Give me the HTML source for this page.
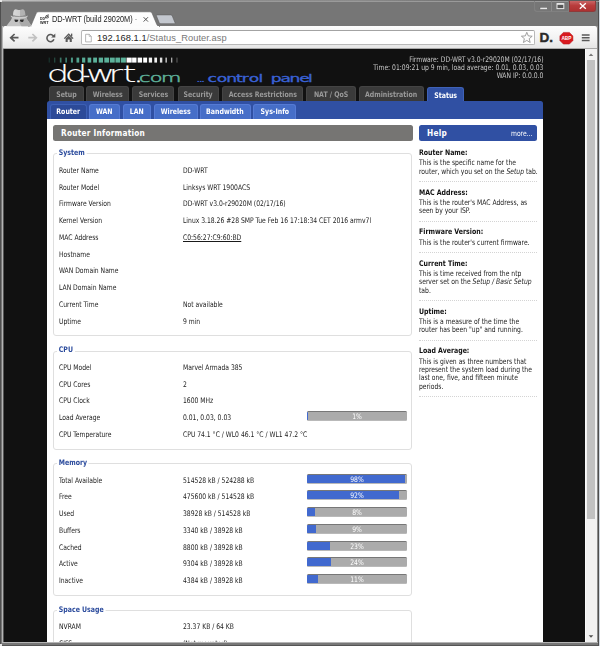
<!DOCTYPE html>
<html lang="en">
<head>
<meta charset="utf-8">
<title>DD-WRT (build 29020M) - Router Status</title>
<style>
html,body{margin:0;padding:0;}
body{width:600px;height:646px;overflow:hidden;position:relative;background:#767676;font-family:"DejaVu Sans Condensed","Liberation Sans",sans-serif;}
.abs{position:absolute;}
/* ---------- window frame ---------- */
#frame{left:0;top:0;width:600px;height:646px;background:#767676;}
#fr-top0{left:0;top:0;width:600px;height:1px;background:linear-gradient(90deg,#c4c4c4,#8e8e8e 25%,#8a8a8a 60%,#5c5c5c 92%);}
#fr-top1{left:0;top:1px;width:600px;height:1px;background:#9a9a9a;}
#fr-l0{left:0;top:2px;width:1px;height:642px;background:#4e4e4e;}
#fr-l2{left:2px;top:26px;width:1px;height:617px;background:#b4b4b4;}
#fr-l3{left:3px;top:48px;width:1px;height:594px;background:#555;}
#fr-r0{left:599px;top:0;width:1px;height:646px;background:#cfd6de;}
#fr-r1{left:598px;top:2px;width:1px;height:644px;background:#4e4e4e;}
#fr-r2{left:597px;top:26px;width:1px;height:617px;background:#8c8c8c;}
#fr-b0{left:3px;top:642px;width:595px;height:1px;background:#b4b4b4;}
#fr-b1{left:1px;top:643px;width:597px;height:2px;background:#777;}
#fr-b2{left:2px;top:645px;width:597px;height:1px;background:#555;}
#fr-bl{left:0;top:644px;width:2px;height:2px;background:#e8e8e8;}
#fr-tl{left:0;top:0;width:2px;height:2px;background:#e8e8e8;}
/* caption buttons */
#btn-min{left:534px;top:1px;width:18px;height:11px;border-right:1px solid #8a8a8a;border-bottom:1px solid #808080;border-left:1px solid #808080;box-sizing:border-box;border-radius:0 0 0 3px;}
#btn-max{left:552px;top:1px;width:17px;height:11px;border-right:1px solid #808080;border-bottom:1px solid #808080;box-sizing:border-box;}
#btn-close{left:569px;top:1px;width:27px;height:11px;background:linear-gradient(#c96666,#b93c3c 45%,#ad3131);border:1px solid #8e3a3a;border-top:none;box-sizing:border-box;border-radius:0 0 3px 0;}
/* toolbar */
#toolbar{left:3px;top:26px;width:594px;height:22px;background:linear-gradient(#fdfdfd,#f2f2f2 60%,#e6e6e6);border-radius:2px 2px 0 0;}
#tb-line{left:3px;top:48px;width:594px;height:1px;background:#a9a9a9;}
#urlbox{left:81px;top:30px;width:454px;height:15px;box-sizing:border-box;background:#fff;border:1px solid #b9b9b9;border-top-color:#a3a3a3;border-radius:2px;}
#urltext{left:97px;top:32px;font-family:"Liberation Sans",sans-serif;font-size:9.3px;line-height:13px;color:#222;white-space:nowrap;letter-spacing:0.05px;}
#urltext span{color:#777;}
#tabtitle{left:52px;top:13px;font-family:"Liberation Sans",sans-serif;font-size:8.5px;line-height:13px;color:#222;white-space:nowrap;transform:scaleX(.865);transform-origin:0 50%;}
/* ---------- page ---------- */
#page{left:4px;top:49px;width:581.3px;height:593px;background:#111;overflow:hidden;}
#scroll{left:585.3px;top:49px;width:11.5px;height:593px;background:#f1f1f1;border-left:1px solid #fafafa;box-sizing:border-box;}
#thumb{left:587.3px;top:59.75px;width:7.5px;height:458.75px;background:#c1c1c1;}
#pg{left:-4px;top:-49px;width:600px;height:700px;}
#pg .t{position:absolute;white-space:nowrap;}
.info{right:56.7px;font-size:7.7px;line-height:10px;color:#c9c9c9;text-align:right;transform:scaleX(.875);transform-origin:100% 50%;}
/* main tabs */
.mt{top:86px;height:15px;box-sizing:border-box;background:#3a3a3a;border:1px solid #444;border-bottom:none;border-radius:3px 3px 0 0;color:#9a9a9a;font-weight:bold;font-size:7.7px;line-height:10px;text-align:center;}
.mt.on{background:#3050a3;border-color:#3f62b8;color:#fff;top:87px;height:15px;}
#blue{left:47px;top:101px;width:496px;height:600px;background:#3050a3;border-radius:2.5px 2.5px 0 0;}
.st{top:104px;height:15px;box-sizing:border-box;background:#466ec8;border:1px solid #557ad4;border-bottom:none;border-radius:3px 3px 0 0;color:#fff;font-weight:bold;font-size:7.7px;line-height:10px;text-align:center;}
.mt span,.st span{display:inline-block;position:relative;transform:scaleX(.9);}
.st.on{background:#2c4a98;border-color:#3c5fb4;}
#white{left:47px;top:119px;width:496px;height:600px;background:#fff;}
#h2{left:53.3px;top:125.25px;width:359.45px;height:15.5px;background:#767573;border-radius:2.5px;}
#h2b{left:419.25px;top:125.25px;width:118px;height:15.5px;background:#3050a3;border-radius:2.5px;}
.h2t{color:#fff;font-weight:bold;font-size:8.2px;line-height:10px;letter-spacing:0.25px;}
#more{font-size:7.7px;line-height:10px;color:#fff;transform:scaleX(.875);transform-origin:0 50%;}
.fs{left:53px;width:359px;box-sizing:border-box;border:1px solid #dfdfdf;border-radius:3px;}
.lg{left:57px;background:#fff;padding:0 2px;color:#2a4a9c;font-weight:bold;font-size:7.7px;line-height:10px;transform:scaleX(.9);transform-origin:0 50%;}
.l{left:59px;font-size:7.7px;line-height:10px;color:#1a1a1a;transform:scaleX(.875);transform-origin:0 50%;}
.v{left:183px;font-size:7.7px;line-height:10px;color:#1a1a1a;transform:scaleX(.875);transform-origin:0 50%;}
.bar{left:307px;width:100px;height:10px;background:#ababab;box-sizing:border-box;border-top:1px solid #777;border-bottom:1px solid #b9b9b9;border-radius:1.5px;overflow:hidden;}
.bar i{position:absolute;left:0;top:0;height:10px;background:#4169cf;display:block;}
.bar b{position:absolute;left:0;top:-0.2px;width:100px;text-align:center;color:#fff;font-weight:normal;font-size:7.5px;line-height:10px;transform:scaleX(.9);}
.ht{left:419px;font-size:7.7px;line-height:10px;font-weight:bold;color:#111;transform:scaleX(.9);transform-origin:0 50%;}
.hp{left:419px;font-size:7.7px;line-height:10px;color:#1a1a1a;white-space:nowrap;transform:scaleX(.875);transform-origin:0 50%;}
.hs{left:419px;width:118px;height:0;border-top:1px dotted #d4d4d4;}
</style>
</head>
<body>
<div id="frame" class="abs"></div>
<div id="fr-top0" class="abs"></div><div id="fr-top1" class="abs"></div>
<div id="fr-l0" class="abs"></div><div id="fr-l2" class="abs"></div><div id="fr-l3" class="abs"></div>
<div id="fr-r0" class="abs"></div><div id="fr-r1" class="abs"></div><div id="fr-r2" class="abs"></div>
<div id="fr-b0" class="abs"></div><div id="fr-b1" class="abs"></div><div id="fr-b2" class="abs"></div><div id="fr-bl" class="abs"></div><div id="fr-tl" class="abs"></div>
<div id="btn-min" class="abs"></div><div id="btn-max" class="abs"></div><div id="btn-close" class="abs"></div>
<div id="toolbar" class="abs"></div>
<div id="tb-line" class="abs"></div>
<div id="urlbox" class="abs"></div>
<svg class="abs" id="chrome" style="left:0;top:0" width="600" height="49" viewBox="0 0 600 49">
<defs>
<linearGradient id="tabg" x1="0" y1="0" x2="0" y2="1"><stop offset="0" stop-color="#ffffff"/><stop offset="1" stop-color="#fbfbfb"/></linearGradient>
<linearGradient id="hatg" x1="0" y1="0" x2="1" y2="0"><stop offset="0" stop-color="#d8d8d8"/><stop offset="0.55" stop-color="#cfcfcf"/><stop offset="0.56" stop-color="#b4b4b4"/><stop offset="1" stop-color="#b0b0b0"/></linearGradient>
</defs>
<!-- active tab -->
<path d="M28.5,26.5 C30.3,26.3 31,25.8 31.7,24 L36,13.8 C36.6,12.4 37.4,11.8 39,11.8 L149.3,11.8 C150.9,11.8 151.7,12.4 152.3,13.8 L156.6,24 C157.3,25.8 158,26.3 159.8,26.5 Z" fill="url(#tabg)" stroke="#5f5f5f" stroke-width="0.6"/>
<rect x="29.5" y="26" width="129.5" height="1.2" fill="#fcfcfc"/>
<!-- new tab button -->
<path d="M156.4,15.8 C156.2,15.2 156.5,14.9 157.1,14.9 L170.6,14.9 C171.5,14.9 172,15.3 172.3,16 L175,22.7 C175.3,23.4 174.9,23.7 174.2,23.7 L160.7,23.7 C159.9,23.7 159.4,23.3 159.1,22.6 Z" fill="#c3c7ce" stroke="#5e5e5e" stroke-width="0.6"/>
<!-- incognito -->
<g>
<path d="M6.3,26.2 C8.5,23 10.5,21.5 12.4,17 L26,17 C28,21.5 30,23 31.6,26.2 Z" fill="#c4c4c4"/>
<path d="M19.2,22.5 L21,17 L26,17 C28,21.5 30,23 31.6,26.2 L21.5,26.2 Z" fill="#a9a9a9"/>
<path d="M10.8,15.6 C13,17.6 25.4,17.6 27.6,15.6 C27.9,16.6 27,17.6 25.5,18 C22,18.8 16.4,18.8 12.9,18 C11.4,17.6 10.5,16.6 10.8,15.6 Z" fill="#cdcdcd"/>
<path d="M13,16 C13,11.5 13.8,9.2 15.6,9.2 C17.2,9.2 17.9,10 19.2,10 C20.5,10 21.2,9.2 22.8,9.2 C24.6,9.2 25.4,11.5 25.4,16 C23,17.2 15.4,17.2 13,16 Z" fill="url(#hatg)"/>
<path d="M13.1,15.3 C16,17 22.4,17 25.3,15.3" fill="none" stroke="#8a8a8a" stroke-width="0.8"/>
<path d="M14.4,19.4 L18.3,19.8 C18.3,21.4 17.5,22 16.4,22 C15.2,22 14.5,21 14.4,19.4 Z" fill="#2e2e2e"/>
<path d="M19.9,19.8 L23.8,19.4 C23.7,21 23,22 21.8,22 C20.7,22 19.9,21.4 19.9,19.8 Z" fill="#2e2e2e"/>
</g>
<!-- tab close -->
<path d="M143.6,17.2 L148,21.6 M148,17.2 L143.6,21.6" stroke="#555" stroke-width="1" fill="none"/>
<!-- back -->
<path d="M18.5,37.7 L11,37.7 M14.6,34 L10.7,37.7 L14.6,41.4" stroke="#5a5a5a" stroke-width="1.7" fill="none" stroke-linejoin="miter"/>
<!-- forward -->
<path d="M28.3,37.7 L36,37.7 M32.4,34 L36.3,37.7 L32.4,41.4" stroke="#c2c2c2" stroke-width="1.7" fill="none"/>
<!-- reload -->
<path d="M53.6,36.2 A3.6,3.6 0 1 0 53.9,39.3" stroke="#5a5a5a" stroke-width="1.6" fill="none"/>
<path d="M55.3,33.5 L55.3,37.6 L51.2,37.6 Z" fill="#5a5a5a"/>
<!-- home -->
<path d="M63.8,38.2 L68.7,33.3 L73.6,38.2 L72.6,39.1 L68.7,35.3 L64.8,39.1 Z" fill="#5a5a5a"/>
<path d="M65.6,38.6 L68.7,35.8 L71.8,38.6 L71.8,42 L69.7,42 L69.7,39.6 L67.7,39.6 L67.7,42 L65.6,42 Z" fill="#5a5a5a"/>
<rect x="71" y="33.6" width="1.3" height="2.6" fill="#5a5a5a"/>
<!-- page icon -->
<path d="M85.6,34.3 L89.3,34.3 L91.3,36.3 L91.3,41.9 L85.6,41.9 Z" fill="#fff" stroke="#9a9a9a" stroke-width="0.7"/>
<path d="M89.2,34.4 L89.2,36.4 L91.2,36.4" fill="none" stroke="#9a9a9a" stroke-width="0.6"/>
<!-- star -->
<path d="M526.8,32.3 L528.3,35.9 L532.2,36.2 L529.2,38.7 L530.2,42.5 L526.8,40.4 L523.4,42.5 L524.4,38.7 L521.4,36.2 L525.3,35.9 Z" fill="#fdfdfd" stroke="#8a8a8a" stroke-width="0.8" stroke-linejoin="round"/>
<!-- D. extension -->
<text x="539.6" y="42" font-family="'Liberation Sans',sans-serif" font-weight="700" font-size="12.5" fill="#2a2a2a" stroke="#2a2a2a" stroke-width="0.4" textLength="13.5" lengthAdjust="spacingAndGlyphs">D.</text>
<!-- ABP -->
<path d="M563.4,32.4 L569.4,32.4 L572.9,35.9 L572.9,40.6 L569.4,44.1 L563.4,44.1 L559.9,40.6 L559.9,35.9 Z" fill="#d8191f" stroke="#b01016" stroke-width="0.5"/>
<text x="561.4" y="40.2" font-family="'Liberation Sans',sans-serif" font-weight="700" font-size="5.6" fill="#fff" textLength="10" lengthAdjust="spacingAndGlyphs">ABP</text>
<!-- menu -->
<path d="M581.8,35 L589.6,35 M581.8,37.7 L589.6,37.7 M581.8,40.4 L589.6,40.4" stroke="#5a5a5a" stroke-width="1.5"/>
<!-- caption glyphs -->
<rect x="540" y="7.4" width="7.2" height="2" fill="#e9e9e9" stroke="#5a5a5a" stroke-width="0.4"/>
<rect x="557" y="3.6" width="6.8" height="5" fill="#555" stroke="#e9e9e9" stroke-width="1"/>
<rect x="557" y="3.4" width="6.8" height="1.4" fill="#e9e9e9"/>
<path d="M579.8,3.2 L585.8,8.8 M585.8,3.2 L579.8,8.8" stroke="#fff" stroke-width="1.35"/>
</svg>
<svg class="abs" id="favicon" style="left:0;top:0;filter:grayscale(1)" width="50" height="25" viewBox="0 0 50 25">
<!-- favicon -->
<g fill="#222" font-family="'Liberation Sans',sans-serif" font-weight="700">
<text x="40" y="20.2" font-size="3.4" textLength="5" lengthAdjust="spacingAndGlyphs">DD</text>
<text x="40" y="23.7" font-size="3.6" textLength="8.6" lengthAdjust="spacingAndGlyphs">WRT</text>
<path d="M45.2,18.4 A3.6,3.6 0 0 1 48.8,14.8 M46.4,18.4 A2.4,2.4 0 0 1 48.8,16 M47.6,18.4 A1.2,1.2 0 0 1 48.8,17.2" fill="none" stroke="#222" stroke-width="0.75"/>
</g>
</svg>
<div id="tabtitle" class="abs">DD-WRT (build 29020M) <span style="color:#8a8a8a">-</span></div>
<div id="urltext" class="abs">192.168.1.1<span>/Status_Router.asp</span></div>
<div id="page" class="abs">
<div id="pg" class="abs">
<svg class="abs" id="bars" style="left:48px;top:57px" width="134" height="6" viewBox="0 0 134 6"><rect x="0.70" y="0.6" width="1" height="5" fill="#1b3a33"/><rect x="6.26" y="0.6" width="1" height="5" fill="#2a5a4e"/><rect x="11.82" y="0.6" width="1.7" height="5" fill="#3a7666"/><rect x="17.38" y="0.6" width="1.5" height="5" fill="#43897a"/><rect x="22.94" y="0.6" width="2" height="5" fill="#4b9886"/><rect x="28.50" y="0.6" width="2.7" height="5" fill="#52a38f"/><rect x="34.06" y="0.6" width="3.2" height="5" fill="#57ab96"/><rect x="39.62" y="0.6" width="3.6" height="5" fill="#5aaf99"/><rect x="45.18" y="0.6" width="3.8" height="5" fill="#5bb19a"/><rect x="50.74" y="0.6" width="4.3" height="5" fill="#5bb19a"/><rect x="56.30" y="0.6" width="4.7" height="5" fill="#5bb19a"/><rect x="61.86" y="0.6" width="4.9" height="5" fill="#5bb19a"/><rect x="67.42" y="0.6" width="4.8" height="5" fill="#5bb19a"/><rect x="72.98" y="0.6" width="4.9" height="5" fill="#5bb19a"/><rect x="78.54" y="0.6" width="5.2" height="5" fill="#fff"/><rect x="84.10" y="0.6" width="4.4" height="5" fill="#fff"/><rect x="89.66" y="0.6" width="4.4" height="5" fill="#fff"/><rect x="95.22" y="0.6" width="3.9" height="5" fill="#fff"/><rect x="100.78" y="0.6" width="3.3" height="5" fill="#f4f4f4"/><rect x="106.34" y="0.6" width="2.7" height="5" fill="#eee"/><rect x="111.90" y="0.6" width="2.4" height="5" fill="#e0e0e0"/><rect x="117.46" y="0.6" width="1.4" height="5" fill="#ccc"/><rect x="123.02" y="0.6" width="1.3" height="5" fill="#aaa"/><rect x="128.58" y="0.6" width="0.8" height="5" fill="#777"/></svg>
<svg class="abs" id="logo" style="left:40px;top:50px" width="300" height="45" viewBox="0 0 300 45">
    <g font-family="'DejaVu Sans Light','DejaVu Sans',sans-serif" font-weight="200">
    <text transform="translate(9,32) scale(1.58,1)" font-size="22.5" fill="#fff" stroke="#fff" stroke-width="0.15" x="-1.49 9.9 21.9 23.43 37.73 46.52">dd<tspan font-size="10" dy="-3.4" stroke-width="1">-</tspan><tspan dy="3.4">wrt</tspan></text>
    <text transform="translate(97,32) scale(1.7,1)" font-size="12.3" fill="#5aa993" stroke="#5aa993" stroke-width="0.55" x="-2.53 1.14 7.54 14.18"><tspan font-size="21" fill="#fff" stroke="#fff" stroke-width="0.3">.</tspan>com</text>
    </g>
    <text transform="translate(157,31.599999999999994) scale(1.6,1)" font-family="'DejaVu Sans',sans-serif" font-weight="400" font-size="10.7" fill="#3a62d6" stroke="#3a62d6" stroke-width="0.3" x="-0.59 0.88 2.35 5.0 6.6 12.41 18.28 24.34 27.9 32.41 38.43 41.88 46.03 52.23 57.78 63.91 69.43"><tspan font-size="9" stroke-width="0">...</tspan> control panel</text>
    </svg>
<div class="t info" style="top:54.50px">Firmware: DD-WRT v3.0-r29020M (02/17/16)</div>
<div class="t info" style="top:62.50px">Time: 01:09:21 up 9 min, load average: 0.01, 0.03, 0.03</div>
<div class="t info" style="top:70.50px">WAN IP: 0.0.0.0</div>
<div class="t mt" style="left:48.75px;width:35.0px"><span style="top:2.50px">Setup</span></div><div class="t mt" style="left:86.25px;width:42.5px"><span style="top:2.50px">Wireless</span></div><div class="t mt" style="left:131.75px;width:42.5px"><span style="top:2.50px">Services</span></div><div class="t mt" style="left:177.5px;width:41.25px"><span style="top:2.50px">Security</span></div><div class="t mt" style="left:221.75px;width:81.5px"><span style="top:2.50px">Access Restrictions</span></div><div class="t mt" style="left:306.25px;width:49.5px"><span style="top:2.50px">NAT / QoS</span></div><div class="t mt" style="left:359.25px;width:64.5px"><span style="top:2.50px">Administration</span></div><div class="t mt on" style="left:427px;width:36.75px"><span style="top:2.50px">Status</span></div>
<div id="blue" class="abs"></div>
<div class="t st on" style="left:49.5px;width:37.0px"><span style="top:1.50px">Router</span></div><div class="t st" style="left:89.25px;width:30.75px"><span style="top:1.50px">WAN</span></div><div class="t st" style="left:122.75px;width:28.5px"><span style="top:1.50px">LAN</span></div><div class="t st" style="left:153.75px;width:43.75px"><span style="top:1.50px">Wireless</span></div><div class="t st" style="left:200px;width:50.5px"><span style="top:1.50px">Bandwidth</span></div><div class="t st" style="left:253.25px;width:43.0px"><span style="top:1.50px">Sys-Info</span></div>
<div id="white" class="abs"></div>
<div id="h2" class="abs"></div><div id="h2b" class="abs"></div>
<div class="t h2t" style="left:61px;top:128.00px">Router Information</div><div class="t h2t" style="left:427px;top:128.00px">Help</div><div class="t" id="more" style="left:510.6px;top:128.50px">more...</div>
<div class="abs fs" style="top:153px;height:183px"></div><div class="t lg" style="top:147.50px">System</div>
<div class="t l" style="top:165.50px">Router Name</div><div class="t v" style="top:165.50px">DD-WRT</div>
<div class="t l" style="top:182.50px">Router Model</div><div class="t v" style="top:182.50px">Linksys WRT 1900ACS</div>
<div class="t l" style="top:198.50px">Firmware Version</div><div class="t v" style="top:198.50px">DD-WRT v3.0-r29020M (02/17/16)</div>
<div class="t l" style="top:215.50px">Kernel Version</div><div class="t v" style="top:215.50px">Linux 3.18.26 #28 SMP Tue Feb 16 17:18:34 CET 2016 armv7l</div>
<div class="t l" style="top:232.50px">MAC Address</div><div class="t v" style="top:232.50px"><u>C0:56:27:C9:60:BD</u></div>
<div class="t l" style="top:249.50px">Hostname</div>
<div class="t l" style="top:265.50px">WAN Domain Name</div>
<div class="t l" style="top:282.50px">LAN Domain Name</div>
<div class="t l" style="top:299.50px">Current Time</div><div class="t v" style="top:299.50px">Not available</div>
<div class="t l" style="top:316.50px">Uptime</div><div class="t v" style="top:316.50px">9 min</div>
<div class="abs fs" style="top:351px;height:99px"></div><div class="t lg" style="top:344.50px">CPU</div>
<div class="t l" style="top:362.50px">CPU Model</div><div class="t v" style="top:362.50px">Marvel Armada 385</div>
<div class="t l" style="top:379.50px">CPU Cores</div><div class="t v" style="top:379.50px">2</div>
<div class="t l" style="top:395.50px">CPU Clock</div><div class="t v" style="top:395.50px">1600 MHz</div>
<div class="t l" style="top:412.50px">Load Average</div><div class="t v" style="top:412.50px">0.01, 0.03, 0.03</div><div class="abs bar" style="top:410.8px"><i style="width:1px"></i><b>1%</b></div>
<div class="t l" style="top:429.50px">CPU Temperature</div><div class="t v" style="top:429.50px">CPU 74.1 °C / WL0 46.1 °C / WL1 47.2 °C</div>
<div class="abs fs" style="top:463px;height:132.5px"></div><div class="t lg" style="top:457.50px">Memory</div>
<div class="t l" style="top:475.50px">Total Available</div><div class="t v" style="top:475.50px">514528 kB / 524288 kB</div><div class="abs bar" style="top:473.8px"><i style="width:98px"></i><b>98%</b></div>
<div class="t l" style="top:491.50px">Free</div><div class="t v" style="top:491.50px">475600 kB / 514528 kB</div><div class="abs bar" style="top:489.8px"><i style="width:92px"></i><b>92%</b></div>
<div class="t l" style="top:508.50px">Used</div><div class="t v" style="top:508.50px">38928 kB / 514528 kB</div><div class="abs bar" style="top:506.8px"><i style="width:8px"></i><b>8%</b></div>
<div class="t l" style="top:525.50px">Buffers</div><div class="t v" style="top:525.50px">3340 kB / 38928 kB</div><div class="abs bar" style="top:523.8px"><i style="width:9px"></i><b>9%</b></div>
<div class="t l" style="top:542.50px">Cached</div><div class="t v" style="top:542.50px">8800 kB / 38928 kB</div><div class="abs bar" style="top:540.8px"><i style="width:23px"></i><b>23%</b></div>
<div class="t l" style="top:558.50px">Active</div><div class="t v" style="top:558.50px">9304 kB / 38928 kB</div><div class="abs bar" style="top:556.8px"><i style="width:24px"></i><b>24%</b></div>
<div class="t l" style="top:575.50px">Inactive</div><div class="t v" style="top:575.50px">4384 kB / 38928 kB</div><div class="abs bar" style="top:573.8px"><i style="width:11px"></i><b>11%</b></div>
<div class="abs fs" style="top:610px;height:80px"></div><div class="t lg" style="top:604.50px">Space Usage</div>
<div class="t l" style="top:621.50px">NVRAM</div><div class="t v" style="top:621.50px">23.37 KB / 64 KB</div>
<div class="t l" style="top:638.50px">CIFS</div><div class="t v" style="top:638.50px">(Not mounted)</div>
<div class="t ht" style="top:147.50px">Router Name:</div><div class="t hp" style="top:157.50px">This is the specific name for the</div><div class="t hp" style="top:166.50px">router, which you set on the <i>Setup</i> tab.</div><div class="abs hs" style="top:180.5px"></div>
<div class="t ht" style="top:187.50px">MAC Address:</div><div class="t hp" style="top:197.50px">This is the router's MAC Address, as</div><div class="t hp" style="top:205.50px">seen by your ISP.</div><div class="abs hs" style="top:220.5px"></div>
<div class="t ht" style="top:226.50px">Firmware Version:</div><div class="t hp" style="top:237.50px">This is the router's current firmware.</div><div class="abs hs" style="top:251.5px"></div>
<div class="t ht" style="top:258.50px">Current Time:</div><div class="t hp" style="top:268.50px">This is time received from the ntp</div><div class="t hp" style="top:276.50px">server set on the <i>Setup / Basic Setup</i></div><div class="t hp" style="top:285.50px">tab.</div><div class="abs hs" style="top:300.0px"></div>
<div class="t ht" style="top:306.50px">Uptime:</div><div class="t hp" style="top:316.50px">This is a measure of the time the</div><div class="t hp" style="top:324.50px">router has been "up" and running.</div><div class="abs hs" style="top:339.5px"></div>
<div class="t ht" style="top:345.50px">Load Average:</div><div class="t hp" style="top:356.50px">This is given as three numbers that</div><div class="t hp" style="top:364.50px">represent the system load during the</div><div class="t hp" style="top:372.50px">last one, five, and fifteen minute</div><div class="t hp" style="top:381.50px">periods.</div><div class="abs hs" style="top:396.0px"></div>
</div>
</div>
<div id="scroll" class="abs"></div><div id="thumb" class="abs"></div>
<svg class="abs" style="left:586px;top:49px" width="11" height="593" viewBox="0 0 11 593"><path d="M2.7,6.9 L5,4.5 L7.3,6.9 Z" fill="#777"/><path d="M2.7,586.3 L5,588.7 L7.3,586.3 Z" fill="#505050"/></svg>
</body>
</html>
